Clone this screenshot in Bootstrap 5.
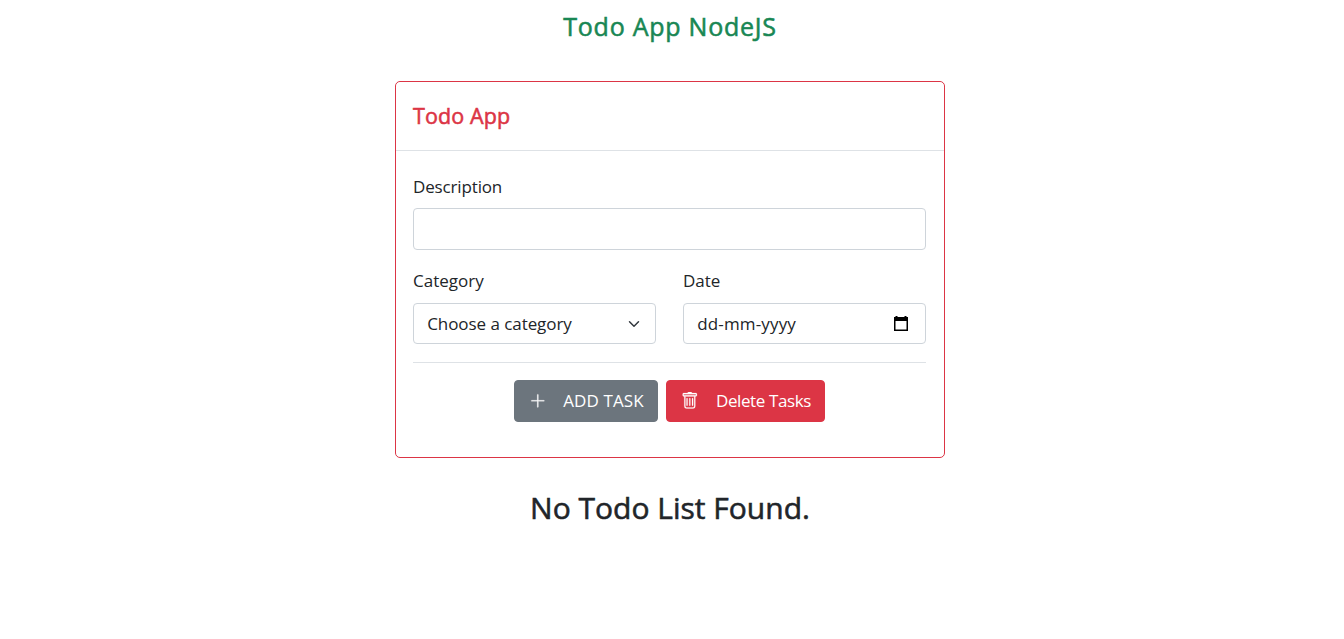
<!DOCTYPE html>
<html lang="en">
<head>
<meta charset="utf-8">
<meta name="viewport" content="width=device-width, initial-scale=1">
<title>Todo App NodeJS</title>
<link href="https://cdn.jsdelivr.net/npm/bootstrap@5.3.0/dist/css/bootstrap.min.css" rel="stylesheet">
<style>
  html { font-size: 17.6px; }
  body { font-family: "Open Sans", "Noto Sans", sans-serif; overflow: hidden; }
  .todo-page { width: 550px; margin-left: 395px; }
  .app-title, .card-heading, .empty-note { -webkit-text-stroke: .55px currentColor; }
  .app-title { font-size: 25px; line-height: 32px; letter-spacing: .75px; padding-top: 10px; margin-bottom: 39px; }
  .todo-card { height: 377px; border-radius: 5px; }
  .todo-card .card-header { height: 69px; padding: 0 17px; background: #fff; border-bottom-color: #dee2e6; }
  .card-heading { font-size: 21.5px; letter-spacing: .1px; }
  .todo-card .card-body { padding: 22px 18px 0 17px; }
  .fit { display: inline-block; white-space: nowrap; }
  .form-label { display: block; font-size: 17px; line-height: 26px; margin-bottom: 9px; }
  .desc-label { position: relative; top: 1px; letter-spacing: -.15px; }
  .form-control, .form-select { height: 41px; font-size: 17px; line-height: 26px; padding-top: 6px; padding-bottom: 6px; border-color: #ced4da; border-radius: 4px; }
  .desc-input { height: 42px; margin-bottom: 18px; }
  .form-select { letter-spacing: -.06px; }
  .date-text { letter-spacing: .15px; }
  .date-icon { margin-right: 3px; }
  .field-grid { display: grid; grid-template-columns: 243px 243px; column-gap: 27px; }
  .rule { margin: 18px 0 17px; border-top: 1px solid #dee2e6; }
  .todo-btn { height: 42px; padding: 0 12px 0 14px; font-size: 17px; border-radius: 4px; }
  .todo-btn svg { width: 17.6px; height: 17.6px; flex: none; margin-right: 17px; stroke: currentColor; stroke-width: .2; }
  .add-btn { width: 144px; letter-spacing: .1px; }
  .delete-btn { width: 159px; letter-spacing: -.4px; }
  .empty-note { font-size: 30px; line-height: 37px; margin-top: 31px; }
</style>
</head>
<body>
<main class="todo-page">
  <h4 class="app-title text-success text-center"><span class="fit">Todo App NodeJS</span></h4>
  <div class="card border-danger todo-card">
    <div class="card-header d-flex align-items-center">
      <h5 class="card-heading text-danger mb-0"><span class="fit">Todo App</span></h5>
    </div>
    <form class="card-body">
      <label class="form-label" for="desc"><span class="fit desc-label">Description</span></label>
      <input id="desc" type="text" class="form-control desc-input">
      <div class="field-grid">
        <div>
          <label class="form-label" for="category"><span class="fit">Category</span></label>
          <select id="category" class="form-select"><option>Choose a category</option></select>
        </div>
        <div>
          <span class="form-label"><span class="fit">Date</span></span>
          <div class="form-control d-flex align-items-center justify-content-between">
            <span class="fit date-text">dd-mm-yyyy</span>
            <svg width="16" height="17" viewBox="0 0 16 17" class="date-icon"><path fill-rule="evenodd" d="M2.500 1h2v1h7V1h2v1H15v14H1V2h1.500zM2.500 6v8.500h11V6z"/></svg>
          </div>
        </div>
      </div>
      <div class="rule"></div>
      <div class="d-flex justify-content-center gap-2">
        <button type="button" class="btn btn-secondary todo-btn add-btn d-flex align-items-center">
          <svg viewBox="0 0 16 16" fill="currentColor"><path fill-rule="evenodd" d="M8 2a.5.5 0 0 1 .5.5v5h5a.5.5 0 0 1 0 1h-5v5a.5.5 0 0 1-1 0v-5h-5a.5.5 0 0 1 0-1h5v-5A.5.5 0 0 1 8 2Z"/></svg>
          <span class="fit">ADD TASK</span>
        </button>
        <button type="button" class="btn btn-danger todo-btn delete-btn d-flex align-items-center">
          <svg viewBox="0 0 16 16" fill="currentColor"><path d="M5.500 5.500A.5.5 0 0 1 6 6v6a.5.5 0 0 1-1 0V6a.5.5 0 0 1 .5-.5Zm2.500 0a.5.5 0 0 1 .5.5v6a.5.5 0 0 1-1 0V6a.5.5 0 0 1 .5-.5Zm3 .5a.5.5 0 0 0-1 0v6a.5.5 0 0 0 1 0V6Z"/><path d="M14.500 3a1 1 0 0 1-1 1H13v9a2 2 0 0 1-2 2H5a2 2 0 0 1-2-2V4h-.5a1 1 0 0 1-1-1V2a1 1 0 0 1 1-1H6a1 1 0 0 1 1-1h2a1 1 0 0 1 1 1h3.500a1 1 0 0 1 1 1v1ZM4.118 4 4 4.059V13a1 1 0 0 0 1 1h6a1 1 0 0 0 1-1V4.059L11.882 4H4.118ZM2.500 3h11V2h-11v1Z"/></svg>
          <span class="fit">Delete Tasks</span>
        </button>
      </div>
    </form>
  </div>
  <h3 class="empty-note text-center"><span class="fit">No Todo List Found.</span></h3>
</main>
<script src="https://cdn.jsdelivr.net/npm/bootstrap@5.3.0/dist/js/bootstrap.bundle.min.js"></script>
</body>
</html>
